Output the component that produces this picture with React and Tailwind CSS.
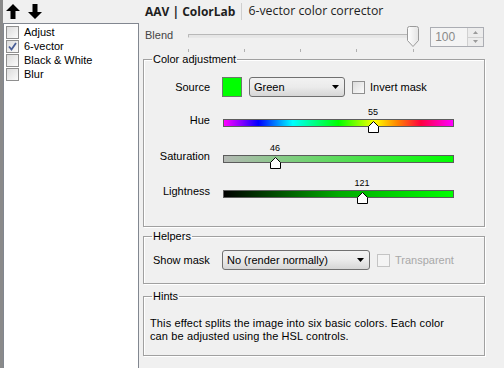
import React from "react";

const F = { fontFamily: '"Liberation Sans", Arial, sans-serif' };

function Check({ checked, disabled }) {
  return (
    <span
      className={`inline-flex w-[13px] h-[13px] shrink-0 items-center justify-center border ${
        disabled ? "border-[#c4c4c4] bg-[#f4f4f4]" : "border-[#8f8f8f] bg-gradient-to-br from-[#dcdcdc] to-[#fbfbfb]"
      }`}
    >
      {checked && (
        <svg width="9" height="9" viewBox="0 0 9 9">
          <path d="M1 4.5 L3.5 7.5 L8 1" fill="none" stroke="#4a5f97" strokeWidth="1.8" />
        </svg>
      )}
    </span>
  );
}

function Select({ w, text }) {
  return (
    <div
      className={`${w} h-[20px] rounded-[3px] border border-[#707070] bg-gradient-to-b from-[#f2f2f2] via-[#ebebeb] to-[#d6d6d6] flex items-center pl-[4px] pr-[5px]`}
    >
      <span className="flex-1 text-[11px] leading-[13px] text-black">{text}</span>
      <svg width="7" height="4" viewBox="0 0 7 4">
        <path d="M0 0 H7 L3.5 4 Z" fill="#000" />
      </svg>
    </div>
  );
}

function Thumb() {
  return (
    <svg width="11" height="12" viewBox="0 0 11 12">
      <path d="M0.5 5.5 L5.5 0.5 L10.5 5.5 V11.5 H0.5 Z" fill="#fff" stroke="#000" strokeWidth="1" />
    </svg>
  );
}

function SliderRow({ label, h, gradient, value, pos }) {
  return (
    <div className={`relative ${h}`}>
      <span className="absolute left-0 top-[17px] w-[66px] text-right text-[11px] leading-[13px]">{label}</span>
      <div className={`absolute left-[79px] top-[22px] w-[231px] h-[8px] border border-[#5c5c5c] ${gradient}`} />
      <span
        className="absolute top-[9px] w-[30px] text-center text-[9px] leading-[12px]"
        style={{ left: 79 + pos - 15 }}
      >
        {value}
      </span>
      <span className="absolute top-[24px] leading-[0]" style={{ left: 79 + pos - 5 }}>
        <Thumb />
      </span>
    </div>
  );
}

function Group({ title, className, children }) {
  return (
    <fieldset className={`box-border border border-[#a0a0a0] shadow-[inset_1px_1px_0_#fff,1px_1px_0_#fff] ${className}`}>
      <legend className="ml-[8px] px-[1px] text-[11px] leading-[13px]">{title}</legend>
      {children}
    </fieldset>
  );
}

export default function App() {
  return (
    <div className="w-[504px] h-[368px] overflow-hidden bg-[#f0f0f0] flex text-black" style={F}>
      <div className="w-[3px] bg-[#8a8a8a] shrink-0" />
      <div className="w-[136px] shrink-0 flex flex-col">
        <div className="h-[23px] flex items-center gap-[8px] pl-[3px]">
          <svg width="14" height="15" viewBox="0 0 14 15">
            <path d="M7 0 L14 7 H9.5 V15 H4.5 V7 H0 Z" fill="#000" />
          </svg>
          <svg width="14" height="15" viewBox="0 0 14 15">
            <path d="M7 15 L14 8 H9.5 V0 H4.5 V8 H0 Z" fill="#000" />
          </svg>
        </div>
        <div className="flex-1 bg-white border border-[#828790] border-b-0 pt-[1px] pl-[2px]">
          {["Adjust", "6-vector", "Black & White", "Blur"].map((t, i) => (
            <div key={t} className="h-[14px] flex items-center gap-[5px] text-[11px] leading-[13px]">
              <Check checked={i === 1} />
              <span>{t}</span>
            </div>
          ))}
        </div>
      </div>
      <div className="flex-1 pl-[4px] flex flex-col">
        <div className="h-[23px] flex items-center pl-[2px]">
          <span className="text-[12px] font-bold text-[#1e1e1e]" style={{ fontFamily: '"Open Sans", sans-serif' }}>
            AAV | ColorLab
          </span>
          <span className="w-px h-[17px] bg-[#cfcfcf] ml-[6px] mr-[6px]" />
          <span className="text-[12.3px] text-[#1e1e1e]" style={{ fontFamily: '"Open Sans", sans-serif' }}>
            6-vector color corrector
          </span>
        </div>
        <div className="h-[30px] relative flex items-start">
          <span className="ml-[2px] mt-[6px] text-[11px] leading-[13px] text-[#444]">Blend</span>
          <div className="relative w-[243px] h-[30px] ml-[11px]">
            <div className="absolute left-[4px] top-[11px] w-[226px] h-[4px] border border-[#b8b8b8] border-b-[#e8e8e8] bg-[#e6e6e6] rounded-[1px]" />
            {[4, 60, 116, 172, 229].map((x) => (
              <div key={x} className="absolute top-[26px] w-px h-[3px] bg-[#b0b0b0]" style={{ left: x }} />
            ))}
            <svg className="absolute left-[223px] top-[3px]" width="12" height="21" viewBox="0 0 12 21">
              <defs>
                <linearGradient id="tg" x1="0" x2="1">
                  <stop offset="0" stopColor="#ffffff" />
                  <stop offset="1" stopColor="#e3e3e3" />
                </linearGradient>
              </defs>
              <path d="M0.5 2.5 Q0.5 0.5 2.5 0.5 H9.5 Q11.5 0.5 11.5 2.5 V14.5 L6 20.5 L0.5 14.5 Z" fill="url(#tg)" stroke="#9a9a9a" />
            </svg>
          </div>
          <div className="ml-[3px] mt-[4px] w-[54px] h-[20px] border border-[#abadb3] bg-[#f4f4f4] flex items-center">
            <span className="flex-1 pl-[4px] text-[12px] text-[#8a8a8a] leading-[14px]">100</span>
            <div className="w-[16px] h-full flex flex-col border-l border-[#d0d0d0]">
              <div className="flex-1 flex items-center justify-center border-b border-[#d0d0d0] bg-[#ececec]">
                <svg width="5" height="3" viewBox="0 0 5 3"><path d="M0 3 L2.5 0 L5 3 Z" fill="#9a9a9a" /></svg>
              </div>
              <div className="flex-1 flex items-center justify-center bg-[#ececec]">
                <svg width="5" height="3" viewBox="0 0 5 3"><path d="M0 0 L5 0 L2.5 3 Z" fill="#9a9a9a" /></svg>
              </div>
            </div>
          </div>
        </div>

        <Group title="Color adjustment" className="w-[342px] h-[174px]">
          <div className="mt-[11px] h-[20px] flex items-center">
            <span className="w-[66px] text-right text-[11px] leading-[13px]">Source</span>
            <span className="ml-[12px] w-[20px] h-[20px] bg-[#00ff00] border border-[#6b7a6b]" />
            <div className="ml-[7px]">
              <Select w="w-[96px]" text="Green" />
            </div>
            <div className="ml-[7px] flex items-center gap-[5px]">
              <Check />
              <span className="text-[11px] leading-[13px]">Invert mask</span>
            </div>
          </div>
          <SliderRow
            label="Hue"
            h="h-[36px]"
            gradient="bg-[linear-gradient(to_right,#ff00ff_0%,#7f00ff_8%,#0000ff_15%,#00ffff_30%,#00ff7f_40%,#00ff00_50%,#ffff00_66%,#ff8000_76%,#ff0040_86%,#ff00ff_100%)]"
            value="55"
            pos={150}
          />
          <SliderRow
            label="Saturation"
            h="h-[35px]"
            gradient="bg-[linear-gradient(to_right,#b4b8b4,#00ff00)]"
            value="46"
            pos={52}
          />
          <SliderRow
            label="Lightness"
            h="h-[36px]"
            gradient="bg-[linear-gradient(to_right,#000000,#00aa00_50%,#00ff00)]"
            value="121"
            pos={139}
          />
        </Group>

        <Group title="Helpers" className="w-[342px] h-[54px] mt-[3px]">
          <div className="mt-[7px] flex items-center">
            <span className="ml-[9px] w-[69px] text-[11px] leading-[13px]">Show mask</span>
            <Select w="w-[148px]" text="No (render normally)" />
            <div className="ml-[7px] flex items-center gap-[5px]">
              <Check disabled />
              <span className="text-[11px] leading-[13px] text-[#a8a8a8]">Transparent</span>
            </div>
          </div>
        </Group>

        <Group title="Hints" className="w-[342px] h-[66px] mt-[6px]">
          <p className="mt-[14px] ml-[6px] text-[11px] leading-[13px] tracking-[0.12px]">
            This effect splits the image into six basic colors. Each color
            <br />
            can be adjusted using the HSL controls.
          </p>
        </Group>
      </div>
    </div>
  );
}
